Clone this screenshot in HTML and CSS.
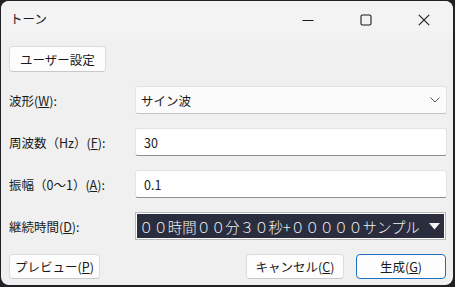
FILE: index.html
```html
<!DOCTYPE html>
<html lang="ja">
<head>
    <meta charset="UTF-8">
    <title>トーン</title>
    <link rel="stylesheet" href="styles.css">
</head>
<body>
    <div class="window">
        <div class="titlebar">
            <div class="title">トーン</div>
            <div class="ctrls">
                <div class="ctrl">
                    <svg width="12" height="12" viewBox="0 0 12 12"><path d="M0.5 6.5h11" stroke="#1a1a1a" stroke-width="1" fill="none"/></svg>
                </div>
                <div class="ctrl">
                    <svg width="12" height="12" viewBox="0 0 12 12"><rect x="1" y="1" width="10" height="10" rx="1.5" stroke="#1a1a1a" stroke-width="1.1" fill="none"/></svg>
                </div>
                <div class="ctrl">
                    <svg width="12" height="12" viewBox="0 0 12 12"><path d="M0.8 0.8l10.4 10.4M11.2 0.8L0.8 11.2" stroke="#1a1a1a" stroke-width="1.1" fill="none"/></svg>
                </div>
            </div>
        </div>

        <div class="content">
            <div class="top_row">
                <div class="btn btn_user">ユーザー設定</div>
            </div>

            <div class="row">
                <div class="label">波形(<u>W</u>):</div>
                <div class="field select">
                    <span>サイン波</span>
                    <svg width="10" height="6" viewBox="0 0 10 6"><path d="M0.5 0.5l4.5 4.5 4.5-4.5" stroke="#555" stroke-width="1" fill="none"/></svg>
                </div>
            </div>

            <div class="row">
                <div class="label">周波数（Hz）(<u>F</u>):</div>
                <div class="field input">30</div>
            </div>

            <div class="row">
                <div class="label">振幅（0〜1）(<u>A</u>):</div>
                <div class="field input">0.1</div>
            </div>

            <div class="row">
                <div class="label">継続時間(<u>D</u>):</div>
                <div class="field dark">
                    <span>００時間００分３０秒+０００００サンプル</span>
                    <svg width="11" height="7" viewBox="0 0 11 7"><path d="M0 0h11L5.5 6.5z" fill="#f2f2f2"/></svg>
                </div>
            </div>

            <div class="bottom_row">
                <div class="btn btn_preview">プレビュー(<u>P</u>)</div>
                <div class="spacer"></div>
                <div class="btn btn_cancel">キャンセル(<u>C</u>)</div>
                <div class="btn btn_ok">生成(<u>G</u>)</div>
            </div>
        </div>
    </div>
</body>
</html>
```

FILE: styles.css
```css
html,body{
    margin: 0;
    padding: 0;
}
body{
    width: 455px;
    height: 287px;
    background-color: #202124;
    font-family: "Noto Sans CJK JP", "Noto Sans", sans-serif;
    font-size: 12px;
    color: #1a1a1a;
    overflow: hidden;
}
.window{
    margin: 1px 2px 0 1px;
    height: 284px;
    background-color: #f0f0f0;
    border-radius: 8px;
    overflow: hidden;
    display: flex;
    flex-direction: column;
}
.titlebar{
    height: 38px;
    background-color: #f3f3f3;
    display: flex;
    align-items: center;
}
.title{
    flex: 1;
    padding-left: 9px;
    font-size: 12.5px;
    margin-top: -3px;
}
.ctrls{
    display: flex;
    height: 100%;
}
.ctrl{
    width: 58px;
    display: flex;
    align-items: center;
    justify-content: center;
    margin-top: -1px;
}
.content{
    padding: 7px 6px 0 8px;
    display: flex;
    flex-direction: column;
    gap: 14px;
}
.top_row{
    display: flex;
    height: 26px;
}
.btn{
    box-sizing: border-box;
    background-color: #fdfdfd;
    border: 1px solid #dcdcdc;
    border-bottom-color: #c8c8c8;
    border-radius: 4px;
    display: flex;
    align-items: center;
    justify-content: center;
    font-size: 12.5px;
}
.btn_user{
    width: 97px;
    height: 26px;
}
.row{
    display: flex;
    align-items: center;
    height: 28px;
}
.label{
    width: 126px;
    font-size: 12.5px;
}
.field{
    box-sizing: border-box;
    flex: 1;
    height: 28px;
    display: flex;
    align-items: center;
    font-size: 12.5px;
}
.select{
    background-color: #fbfbfb;
    border: 1px solid #e3e3e3;
    border-bottom-color: #c4c4c4;
    border-radius: 3px;
    padding: 0 6px 0 5px;
    justify-content: space-between;
}
.input{
    background-color: #fff;
    border: 1px solid #e3e3e3;
    border-bottom: 1px solid #8e8e8e;
    border-radius: 3px;
    padding-left: 8px;
}
.dark{
    margin-right: 1px;
    background-color: #2a2d3e;
    border: 1px solid #b8b8b8;
    box-shadow: inset 0 0 0 1px #ffffff;
    color: #f2f2f2;
    font-size: 14.4px;
    font-weight: 300;
    padding: 0 5px 0 3px;
    justify-content: space-between;
    white-space: nowrap;
    overflow: hidden;
}
.bottom_row{
    display: flex;
    height: 25px;
    gap: 12px;
    padding-right: 1px;
}
.spacer{
    flex: 1;
}
.btn_preview{
    width: 91px;
}
.btn_cancel{
    width: 98px;
}
.btn_ok{
    width: 90px;
    border: 1px solid #1f6fc5;
}
```
